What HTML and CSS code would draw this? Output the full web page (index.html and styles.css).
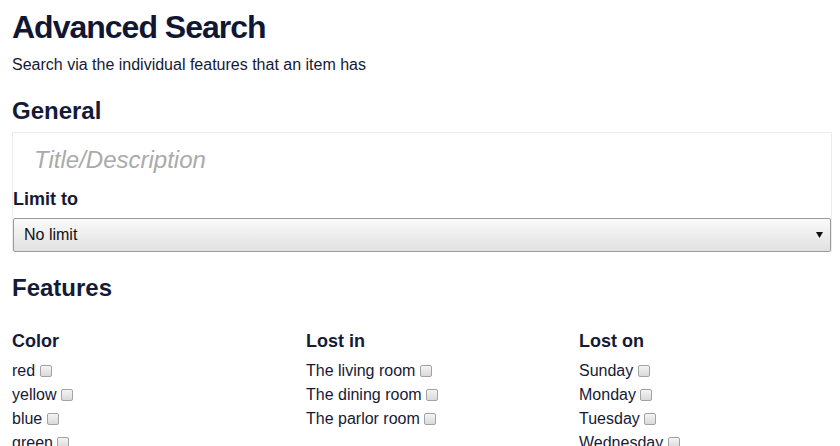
FILE: index.html
```html
<!DOCTYPE html>
<html lang="en">
<head>
<meta charset="utf-8">
<title>Advanced Search</title>
<link rel="stylesheet" href="styles.css">
</head>
<body>
<h1 class="title">Advanced Search</h1>
<p class="subtitle">Search via the individual features that an item has</p>

<h2 class="section">General</h2>
<div class="general-box">
  <input class="text-input" type="text" placeholder="Title/Description">
  <label class="limit-label">Limit to</label>
  <div class="select-wrap">
    <select class="select">
      <option>No limit</option>
    </select>
    <svg class="select-arrow" width="7" height="6" viewBox="0 0 7 6"><path d="M0 0H7L3.5 6Z" fill="#111"/></svg>
  </div>
</div>

<h2 class="section features">Features</h2>
<div class="feature-grid">
  <div class="feature-col">
    <h3 class="feature-title">Color</h3>
    <label class="opt">red <input type="checkbox" class="check"></label>
    <label class="opt">yellow <input type="checkbox" class="check"></label>
    <label class="opt">blue <input type="checkbox" class="check"></label>
    <label class="opt">green <input type="checkbox" class="check"></label>
  </div>
  <div class="feature-col">
    <h3 class="feature-title">Lost in</h3>
    <label class="opt">The living room <input type="checkbox" class="check"></label>
    <label class="opt">The dining room <input type="checkbox" class="check"></label>
    <label class="opt">The parlor room <input type="checkbox" class="check"></label>
  </div>
  <div class="feature-col">
    <h3 class="feature-title">Lost on</h3>
    <label class="opt">Sunday <input type="checkbox" class="check"></label>
    <label class="opt">Monday <input type="checkbox" class="check"></label>
    <label class="opt">Tuesday <input type="checkbox" class="check"></label>
    <label class="opt">Wednesday <input type="checkbox" class="check"></label>
  </div>
</div>
</body>
</html>
```

FILE: styles.css
```css
html, body {
  background: #fff;
}
body {
  margin: 0 8px 0 12px;
  font-family: "Liberation Sans", Arial, sans-serif;
  color: #151a36;
  overflow: hidden;
}
.title {
  margin: 7px 0 0;
  font-size: 32px;
  line-height: 40px;
  font-weight: 700;
  letter-spacing: -1px;
  color: #111733;
}
.subtitle {
  margin: 8px 0 0;
  font-size: 16px;
  line-height: 20px;
}
.section {
  margin: 21px 0 0;
  font-size: 24px;
  line-height: 30px;
  font-weight: 700;
}
.general-box {
  margin-top: 6px;
  border: 1px solid #ececec;
  border-bottom: none;
  display: flex;
  flex-direction: column;
}
.text-input {
  border: none;
  outline: none;
  height: 53px;
  padding: 0 0 0 21px;
  margin: 0;
  font-family: "Liberation Sans", Arial, sans-serif;
  font-size: 24px;
  font-style: italic;
  color: #333;
  background: #fff;
}
.text-input::placeholder {
  color: #aaa;
}
.limit-label {
  margin-top: 2px;
  font-size: 18px;
  line-height: 22px;
  font-weight: 700;
}
.select-wrap {
  position: relative;
  margin-top: 8px;
}
.select {
  appearance: none;
  -webkit-appearance: none;
  display: block;
  width: 100%;
  height: 34px;
  margin: 0;
  padding: 0 0 2px 10px;
  border: 1px solid #9a9a9a;
  border-radius: 2px;
  background: linear-gradient(#fafafa, #e1e1e1);
  font-family: "Liberation Sans", Arial, sans-serif;
  font-size: 16px;
  color: #111;
}
.select-arrow {
  position: absolute;
  right: 8px;
  top: 14px;
  pointer-events: none;
}
.features {
  margin-top: 21px;
}
.feature-grid {
  margin-top: 27px;
  display: grid;
  grid-template-columns: 294px 273px 1fr;
}
.feature-col {
  display: flex;
  flex-direction: column;
  align-items: flex-start;
}
.feature-title {
  margin: 0 0 7px;
  font-size: 18px;
  line-height: 22px;
  font-weight: 700;
}
.opt {
  font-size: 16px;
  line-height: 24px;
  white-space: nowrap;
}
.check {
  appearance: none;
  -webkit-appearance: none;
  width: 12px;
  height: 12px;
  margin: 0;
  border: 1px solid #a3a3a3;
  border-radius: 2px;
  background: linear-gradient(#f4f4f4, #d9d9d9);
  vertical-align: -1px;
}
```
